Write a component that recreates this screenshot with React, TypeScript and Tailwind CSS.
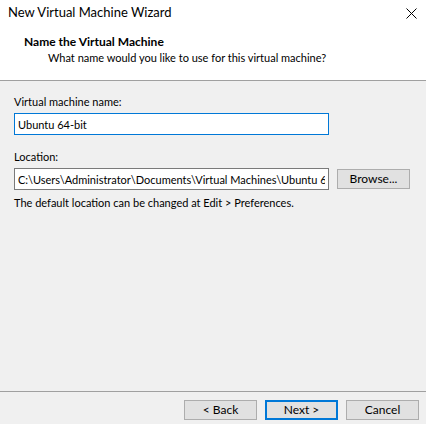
import React from 'react';

const ui = { fontFamily: 'Lato, "Noto Sans", sans-serif' };

function Btn({ label, primary }: { label: string; primary?: boolean }) {
  return (
    <button
      className={`h-[20px] w-[73px] text-[12px] leading-none text-black bg-[#e1e1e1] ${
        primary ? 'border-2 border-[#0078d7]' : 'border border-[#adadad]'
      }`}
      style={ui}
    >
      {label}
    </button>
  );
}

export default function App() {
  return (
    <div className="w-[426px] h-[424px] flex flex-col bg-[#f0f0f0] text-black text-[11px]" style={ui}>
      {/* wizard header */}
      <div className="h-[81px] bg-white border-b border-[#a0a0a0] flex flex-col">
        <div className="h-[26px] flex items-center justify-between pl-[8px] pr-[9px]">
          <span className="text-[13px]">New Virtual Machine Wizard</span>
          <svg width="11" height="11" viewBox="0 0 11 11">
            <path d="M0.5 0.5 L10.5 10.5 M10.5 0.5 L0.5 10.5" stroke="#000" strokeWidth="1" />
          </svg>
        </div>
        <div className="pl-[24px] pt-[8px] text-[12px] font-bold leading-[16px]">Name the Virtual Machine</div>
        <div className="pl-[48px] text-[11px] leading-[16px]">What name would you like to use for this virtual machine?</div>
      </div>

      {/* form */}
      <div className="flex flex-col px-[14px] pt-[14px]">
        <label className="leading-[14px]">Virtual machine name:</label>
        <input
          readOnly
          value="Ubuntu 64-bit"
          className="mt-[4px] w-[315px] h-[22px] bg-white border border-[#0078d7] px-[3px] text-[11px] outline-none"
          style={ui}
        />
        <label className="mt-[15px] leading-[14px]">Location:</label>
        <div className="mt-[4px] flex items-center">
          <input
            readOnly
            value="C:\Users\Administrator\Documents\Virtual Machines\Ubuntu 64-bit"
            className="w-[315px] h-[22px] bg-white border border-[#7a7a7a] px-[3px] text-[11px] outline-none"
            style={ui}
          />
          <div className="ml-[8px]">
            <Btn label="Browse..." />
          </div>
        </div>
        <p className="mt-[6px] leading-[14px]">The default location can be changed at Edit &gt; Preferences.</p>
      </div>

      <div className="flex-1" />

      {/* footer */}
      <div className="border-t border-[#a0a0a0] flex justify-end gap-[8px] pt-[8px] pb-[4px] pr-[7px]">
        <Btn label="< Back" />
        <Btn label="Next >" primary />
        <Btn label="Cancel" />
      </div>
    </div>
  );
}
